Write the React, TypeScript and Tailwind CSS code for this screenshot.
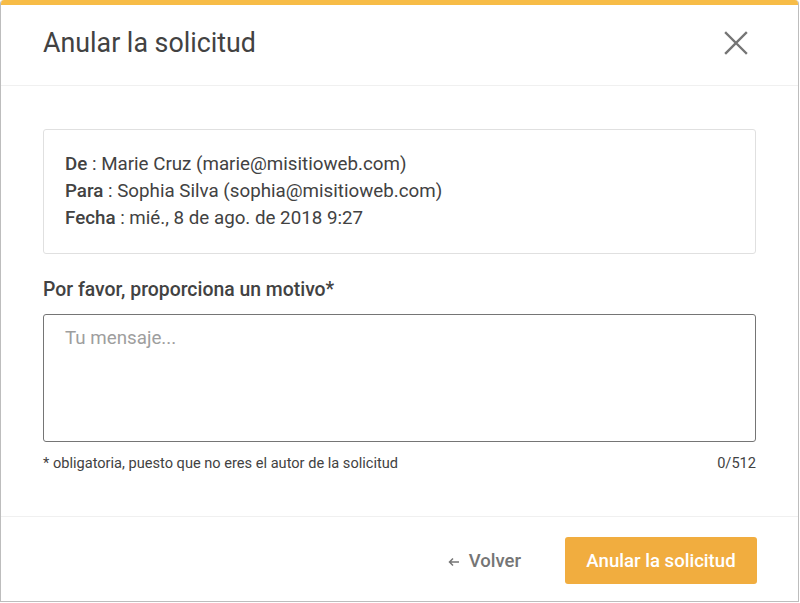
import React from "react";

export default function App() {
  return (
    <div className="w-[800px] h-[603px] bg-white" style={{ fontFamily: "Roboto, 'Liberation Sans', sans-serif" }}>
      <div className="w-[799px] h-[602px] flex flex-col border border-t-0 border-[#bdbdbd] rounded-t-[4px] overflow-hidden">
        <div className="h-[5px] bg-[#f7bc47] shrink-0" />
        {/* header */}
        <div className="h-[81px] flex items-center justify-between pl-[42px] pr-[50px] border-b border-[#f0f0f0] shrink-0">
          <h1 className="text-[26.8px] text-[#424242] leading-none -mt-[3px]">Anular la solicitud</h1>
          <button className="w-[24px] h-[24px] flex items-center justify-center -mt-[5px]">
            <svg width="24" height="24" viewBox="0 0 24 24" fill="none" stroke="#757575" strokeWidth="2.4" strokeLinecap="square">
              <path d="M2 2 L22 22 M22 2 L2 22" />
            </svg>
          </button>
        </div>

        {/* body */}
        <div className="flex-1 px-[42px] pt-[43px]">
          <div className="border border-[#e0e0e0] rounded-[3px] h-[125px] px-[21px] pt-[21px] text-[18.75px] leading-[27px] text-[#424242]">
            <div><span className="font-medium">De</span> : Marie Cruz (marie@misitioweb.com)</div>
            <div><span className="font-medium">Para</span> : Sophia Silva (sophia@misitioweb.com)</div>
            <div><span className="font-medium">Fecha</span> : mié., 8 de ago. de 2018 9:27</div>
          </div>

          <label className="block mt-[24px] text-[19.4px] font-medium text-[#424242] leading-[24px]">
            Por favor, proporciona un motivo*
          </label>
          <textarea
            className="block mt-[12px] w-full h-[128px] border border-[#757575] rounded-[3px] px-[21px] py-[11px] text-[18.75px] leading-[24px] text-[#424242] placeholder-[#9e9e9e] resize-none outline-none"
            placeholder="Tu mensaje..."
          />
          <div className="flex justify-between mt-[12px] text-[14.6px] leading-[18px] text-[#424242]">
            <span>* obligatoria, puesto que no eres el autor de la solicitud</span>
            <span>0/512</span>
          </div>
        </div>

        {/* footer */}
        <div className="h-[85px] border-t border-[#f0f0f0] flex items-center justify-end pr-[41px] gap-[44px] shrink-0">
          <button className="flex items-center gap-[9px] pt-[5px] text-[18.5px] font-medium text-[#757575]">
            <svg width="12" height="10" viewBox="0 0 12 10" fill="none" stroke="#757575" strokeWidth="1.5">
              <path d="M11 5 H2 M5 1.5 L1.5 5 L5 8.5" />
            </svg>
            Volver
          </button>
          <button className="h-[47px] w-[192px] mt-[2px] pt-[3px] rounded-[3px] bg-[#f1ad3f] text-white text-[18.6px] font-medium">
            Anular la solicitud
          </button>
        </div>
      </div>
    </div>
  );
}
